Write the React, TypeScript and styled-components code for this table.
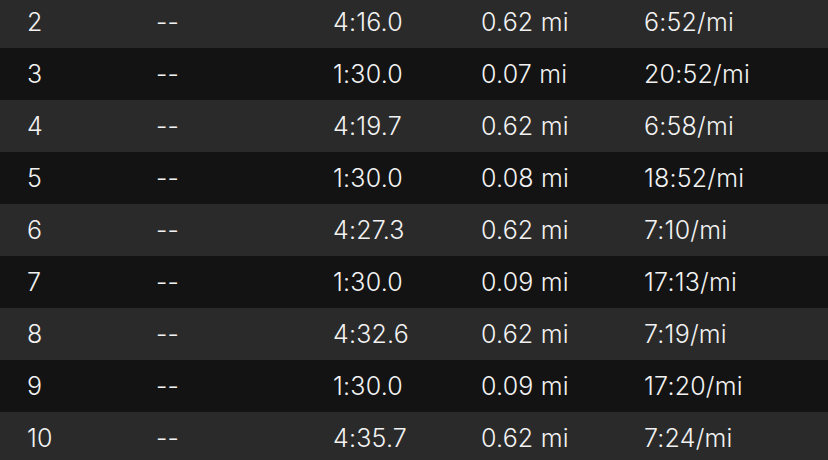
import React from 'react';
import styled, {createGlobalStyle} from 'styled-components';

interface Split {
  index: number;
  time: string;
  distance: string;
  pace: string;
}

const splits: Split[] = [
  {index: 2, time: '4:16.0', distance: '0.62 mi', pace: '6:52/mi'},
  {index: 3, time: '1:30.0', distance: '0.07 mi', pace: '20:52/mi'},
  {index: 4, time: '4:19.7', distance: '0.62 mi', pace: '6:58/mi'},
  {index: 5, time: '1:30.0', distance: '0.08 mi', pace: '18:52/mi'},
  {index: 6, time: '4:27.3', distance: '0.62 mi', pace: '7:10/mi'},
  {index: 7, time: '1:30.0', distance: '0.09 mi', pace: '17:13/mi'},
  {index: 8, time: '4:32.6', distance: '0.62 mi', pace: '7:19/mi'},
  {index: 9, time: '1:30.0', distance: '0.09 mi', pace: '17:20/mi'},
  {index: 10, time: '4:35.7', distance: '0.62 mi', pace: '7:24/mi'},
];

const App = () => {
  return (
    <>
      <GlobalStyle />
      <Table>
        {splits.map((split, i) => (
          <Row key={split.index} striped={i % 2 === 0}>
            <Cell>{split.index}</Cell>
            <Cell>--</Cell>
            <Cell>{split.time}</Cell>
            <Cell>{split.distance}</Cell>
            <Cell>{split.pace}</Cell>
          </Row>
        ))}
      </Table>
    </>
  );
};

export default App;

const GlobalStyle = createGlobalStyle`
  html, body {
    margin: 0;
    padding: 0;
    background: #131313;
    overflow: hidden;
  }
`;

const Table = styled.div`
  display: flex;
  flex-direction: column;
  margin-top: -4px;
  font-family: Inter, 'Liberation Sans', sans-serif;
  font-size: 25px;
  font-weight: 300;
  letter-spacing: 0.2px;
  color: #f2f2f2;
`;

const Row = styled.div<{striped: boolean}>`
  display: grid;
  grid-template-columns: 129px 177px 148px 163px 1fr;
  align-items: center;
  height: 52px;
  padding-left: 27px;
  background-color: ${(props) => (props.striped ? '#2a2a2a' : '#131313')};
`;

const Cell = styled.span`
  white-space: nowrap;
`;
